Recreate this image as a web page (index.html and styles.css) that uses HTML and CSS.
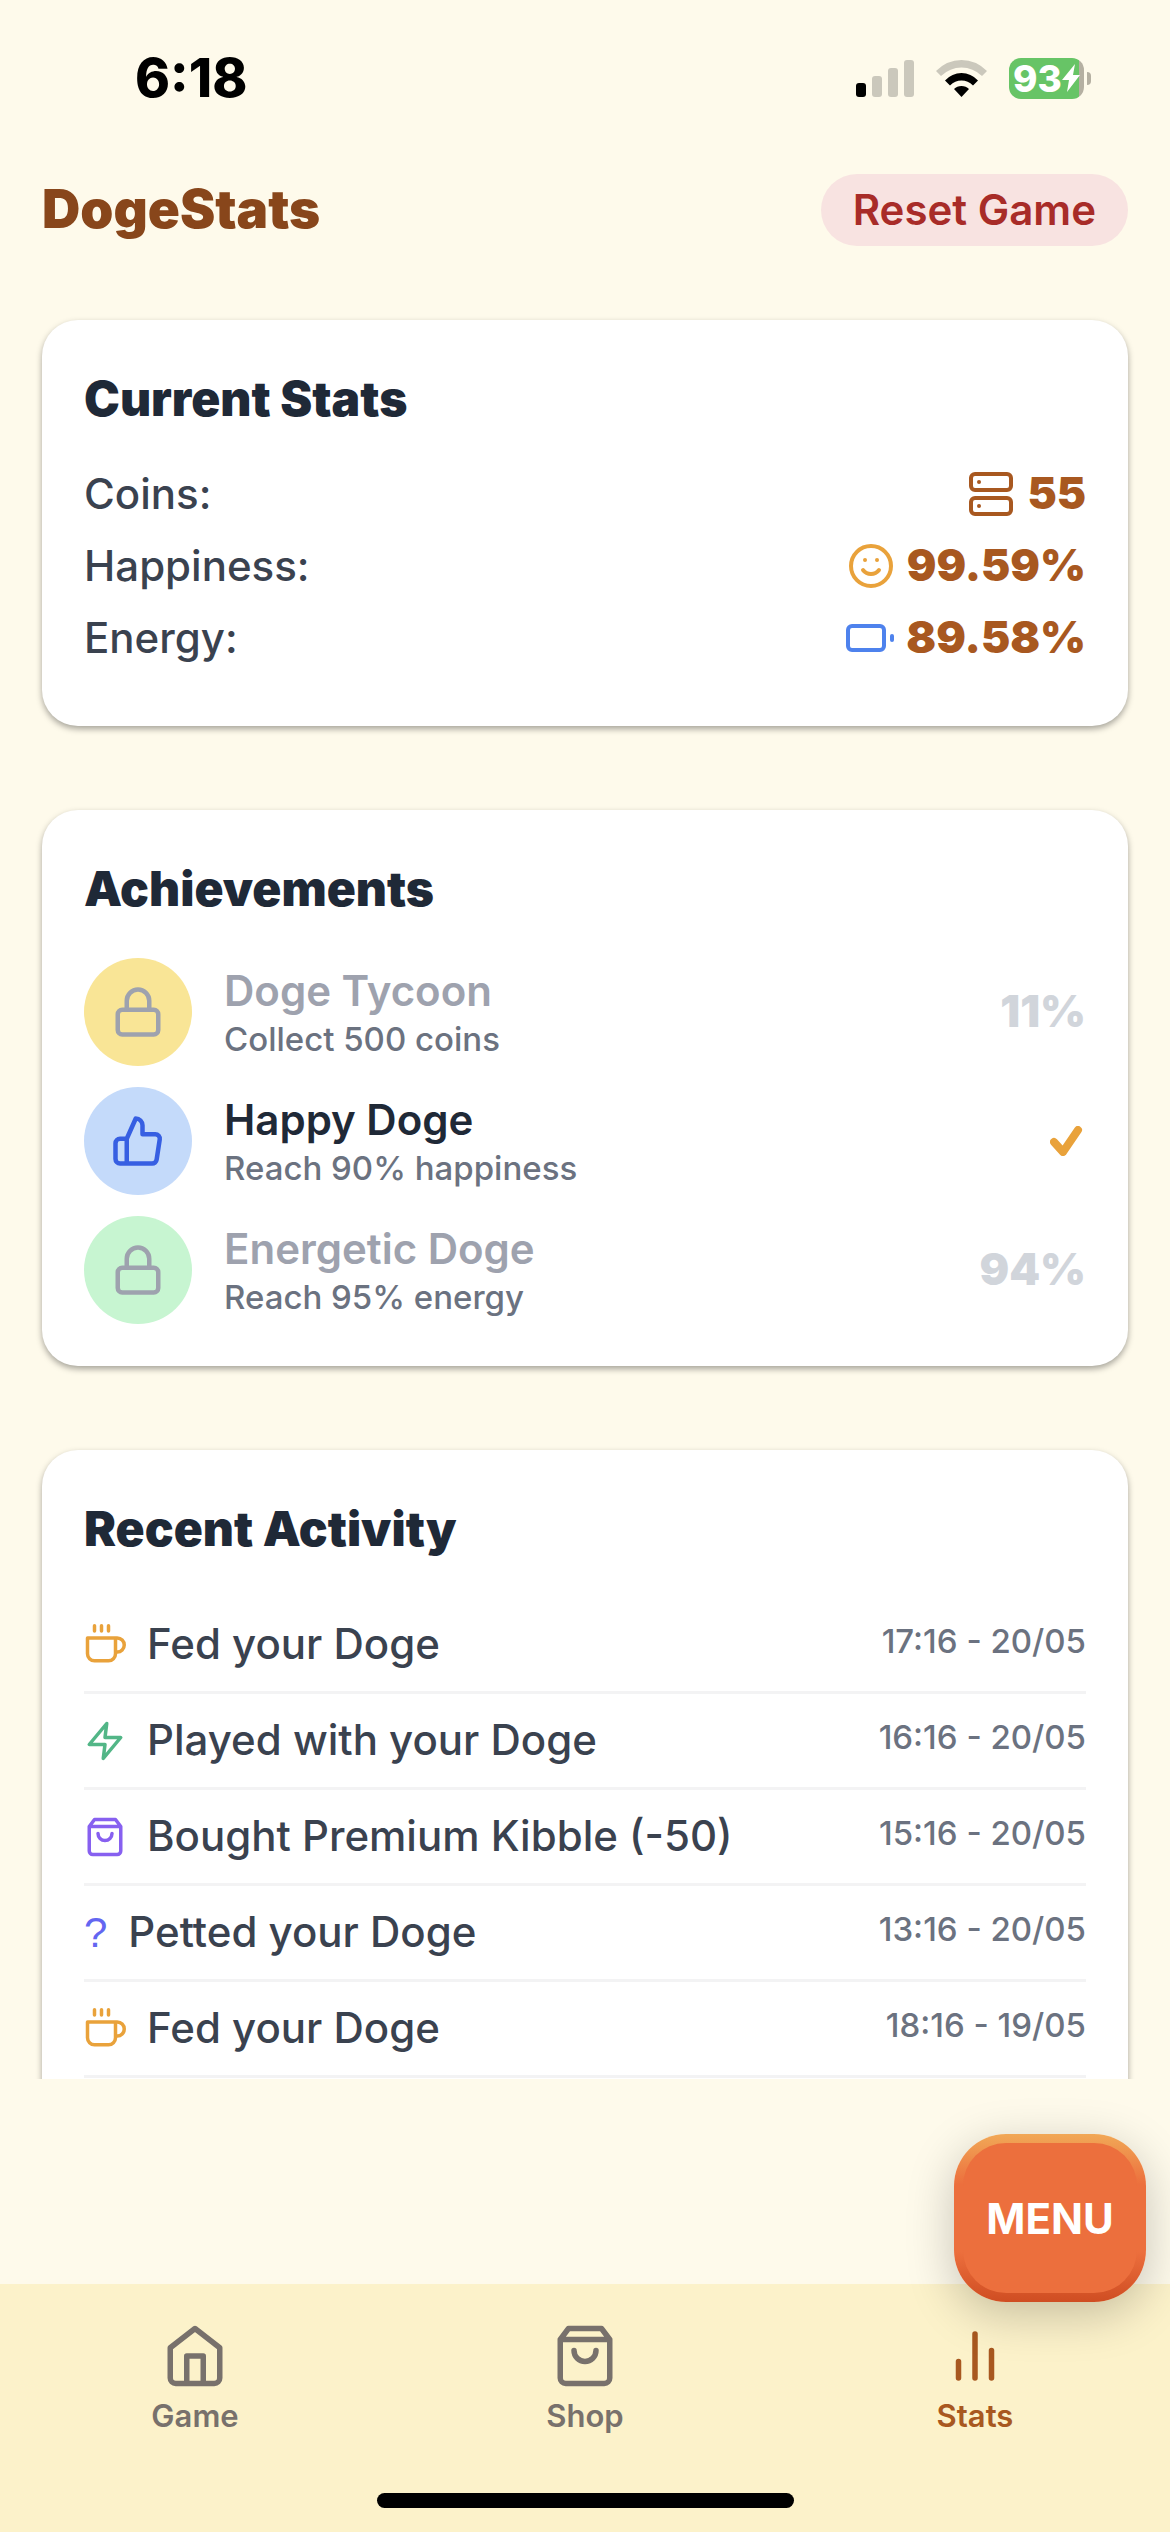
FILE: index.html
```html
<!DOCTYPE html>
<html lang="en">
<head>
<meta charset="utf-8">
<meta name="viewport" content="width=device-width, initial-scale=1">
<title>DogeStats</title>
<link rel="stylesheet" href="styles.css">
</head>
<body>
<svg class="sprite" aria-hidden="true">
  <symbol id="server" viewBox="0 0 24 24"><rect x="2" y="2" width="20" height="8" rx="2"/><rect x="2" y="14" width="20" height="8" rx="2"/><path d="M6 6h.01M6 18h.01"/></symbol>
  <symbol id="smile" viewBox="0 0 24 24"><circle cx="12" cy="12" r="10"/><path d="M8 14s1.500 2 4 2 4-2 4-2M9 9h.01M15 9h.01"/></symbol>
  <symbol id="battery" viewBox="0 0 24 24"><rect x="1" y="6" width="18" height="12" rx="2"/><path d="M23 13v-2"/></symbol>
  <symbol id="lock" viewBox="0 0 24 24"><rect x="3" y="11" width="18" height="11" rx="2"/><path d="M7 11V7a5 5 0 0 1 10 0v4"/></symbol>
  <symbol id="thumb" viewBox="0 0 24 24"><path d="M14 9V5a3 3 0 0 0-3-3l-4 9v11h11.280a2 2 0 0 0 2-1.700l1.380-9a2 2 0 0 0-2-2.300zM7 22H4a2 2 0 0 1-2-2v-7a2 2 0 0 1 2-2h3"/></symbol>
  <symbol id="coffee" viewBox="0 0 24 24"><path d="M18 8h1a4 4 0 0 1 0 8h-1M2 8h16v9a4 4 0 0 1-4 4H6a4 4 0 0 1-4-4zM6 1v3M10 1v3M14 1v3"/></symbol>
  <symbol id="zap" viewBox="0 0 24 24"><path d="M13 2 3 14h9l-1 8 10-12h-9z"/></symbol>
  <symbol id="bag" viewBox="0 0 24 24"><path d="M6 2 3 6v14a2 2 0 0 0 2 2h14a2 2 0 0 0 2-2V6l-3-4zM3 6h18M16 10a4 4 0 0 1-8 0"/></symbol>
  <symbol id="home" viewBox="0 0 24 24"><path d="m3 9 9-7 9 7v11a2 2 0 0 1-2 2H5a2 2 0 0 1-2-2zM9 22V12h6v10"/></symbol>
  <symbol id="chart" viewBox="0 0 24 24"><path d="M18 20V10M12 20V4M6 20v-6"/></symbol>
</svg>
<div class="app">
  <div class="status">
    <span class="clock">6:18</span>
    <div class="indicators">
      <svg class="signal" viewBox="0 0 58 37" aria-label="Signal"><rect y="23" width="10" height="14" rx="3"/><g class="dim"><rect x="16" y="16" width="10" height="21" rx="3"/><rect x="32" y="8" width="10" height="29" rx="3"/><rect x="48" width="10" height="37" rx="3"/></g></svg>
      <svg class="wifi" viewBox="0 0 51 37" aria-label="Wi-Fi"><path class="dim" d="M0 11Q11 0 25.500 0T51 11L46 16Q37 7.500 25.500 7.500T5 16Z"/><path d="M9 20.500Q16 13 25.500 13T42 20.500L37 25.500Q32 20.500 25.500 20.500T14 25.500ZM18 29Q21 26 25.500 26T33 29L25.500 37Z"/></svg>
      <div class="power"><span class="level">93<svg class="bolt" viewBox="0 0 18 28"><path d="M13 0 0 16h7L5 28 18 11h-7z"/></svg></span><span class="nub"></span></div>
    </div>
  </div>
  <header class="header">
    <h1>DogeStats</h1>
    <button class="reset" type="button">Reset Game</button>
  </header>
  <main class="content">
    <section class="card">
      <h2>Current Stats</h2>
      <dl class="stats">
        <div class="stat"><dt>Coins:</dt><dd><svg class="icon i48"><use href="#server"/></svg><span>55</span></dd></div>
        <div class="stat"><dt>Happiness:</dt><dd><svg class="icon i48 amber"><use href="#smile"/></svg><span>99.59%</span></dd></div>
        <div class="stat"><dt>Energy:</dt><dd><svg class="icon i48 blue"><use href="#battery"/></svg><span>89.58%</span></dd></div>
      </dl>
    </section>
    <section class="card">
      <h2>Achievements</h2>
      <ul class="achievements">
        <li class="achievement locked"><span class="badge yellow"><svg class="icon i54"><use href="#lock"/></svg></span><div class="about"><h3>Doge Tycoon</h3><p>Collect 500 coins</p></div><span class="progress">11%</span></li>
        <li class="achievement"><span class="badge sky"><svg class="icon i54"><use href="#thumb"/></svg></span><div class="about"><h3>Happy Doge</h3><p>Reach 90% happiness</p></div><svg class="check" viewBox="0 0 36 30" aria-label="Done"><path d="m4 16 9 10L28 4"/></svg></li>
        <li class="achievement locked"><span class="badge mint"><svg class="icon i54"><use href="#lock"/></svg></span><div class="about"><h3>Energetic Doge</h3><p>Reach 95% energy</p></div><span class="progress">94%</span></li>
      </ul>
    </section>
    <section class="card">
      <h2>Recent Activity</h2>
      <ul class="activity">
        <li><svg class="icon i42 amber"><use href="#coffee"/></svg><span class="event">Fed your Doge</span><time>17:16 - 20/05</time></li>
        <li><svg class="icon i42 green"><use href="#zap"/></svg><span class="event">Played with your Doge</span><time>16:16 - 20/05</time></li>
        <li><svg class="icon i42 purple"><use href="#bag"/></svg><span class="event">Bought Premium Kibble (-50)</span><time>15:16 - 20/05</time></li>
        <li><span class="unknown">?</span><span class="event">Petted your Doge</span><time>13:16 - 20/05</time></li>
        <li><svg class="icon i42 amber"><use href="#coffee"/></svg><span class="event">Fed your Doge</span><time>18:16 - 19/05</time></li>
      </ul>
    </section>
  </main>
  <nav class="tabs">
    <a href="#game"><svg class="icon i66"><use href="#home"/></svg>Game</a>
    <a href="#shop"><svg class="icon i66"><use href="#bag"/></svg>Shop</a>
    <a href="#stats" class="active" aria-current="page"><svg class="icon i66"><use href="#chart"/></svg>Stats</a>
    <span class="home-bar"></span>
  </nav>
  <button class="menu" type="button"><span>MENU</span></button>
</div>
</body>
</html>
```
FILE: styles.css
```css
* { box-sizing: border-box; }
body, h1, h2, h3, p, dl, dd, ul { margin: 0; padding: 0; }
ul { list-style: none; }
button { border: 0; font: inherit; cursor: pointer; }

body {
  background: #fefaeb;
  color: #3a424f;
  font-family: Inter, "Liberation Sans", sans-serif;
  font-size: 42px;
  font-weight: 500;
}

.sprite { position: absolute; width: 0; height: 0; }

.app {
  position: relative;
  display: flex;
  flex-direction: column;
  height: 100vh;
  overflow: hidden;
}

.icon {
  flex: none;
  fill: none;
  stroke: currentColor;
  stroke-width: 2;
  stroke-linecap: round;
  stroke-linejoin: round;
}
.i42 { width: 42px; height: 42px; }
.i48 { width: 48px; height: 48px; }
.i54 { width: 54px; height: 54px; }
.i66 { width: 66px; height: 66px; }
.amber { color: #e9a23b; }
.blue { color: #4e82ed; }
.green { color: #52b687; }
.purple { color: #8760f0; }

/* Status bar */
.status {
  flex: none;
  display: flex;
  justify-content: space-between;
  align-items: center;
  height: 156px;
  padding: 0 79px 0 135px;
  color: #000;
}
.clock { font-size: 53px; font-weight: 800; }
.indicators { display: flex; align-items: center; gap: 22px; }
.signal { width: 58px; height: 37px; }
.wifi { width: 51px; height: 37px; }
.dim { fill: #cbc8bc; }
.power { display: flex; align-items: center; gap: 3px; }
.level {
  display: flex;
  align-items: center;
  justify-content: center;
  width: 75px;
  height: 41px;
  border-radius: 12px;
  background: linear-gradient(90deg, #67c466 70px, #b5b0a2 70px);
  color: #fff;
  font-size: 37px;
  font-weight: 800;
}
.bolt { width: 18px; height: 28px; fill: #fff; }
.nub { width: 4px; height: 13px; border-radius: 0 4px 4px 0; background: #b5b0a2; }

/* Header */
.header {
  flex: none;
  display: flex;
  align-items: center;
  justify-content: space-between;
  padding: 18px 42px 42px;
}
h1 { color: #88461b; font-size: 53px; font-weight: 900; line-height: 70px; padding-bottom: 2px; }
.reset {
  height: 72px;
  padding: 0 32px 2px;
  border-radius: 36px;
  background: #f8e3e1;
  color: #a82c28;
  font-weight: 600;
}

/* Cards */
.content {
  flex: 1;
  min-height: 0;
  overflow: hidden;
  display: flex;
  flex-direction: column;
  gap: 84px;
  margin-bottom: 205px;
  padding: 32px 42px 0;
}
.card {
  flex: none;
  padding: 42px;
  border-radius: 36px;
  background: #fff;
  box-shadow: 0 3px 6px rgba(0, 0, 0, .35);
}
h2 {
  padding-bottom: 2px;
  color: #1f2937;
  font-size: 48px;
  font-weight: 900;
  line-height: 73px;
}

.stats { margin: 21px 0 10px; }
.stat {
  display: flex;
  justify-content: space-between;
  align-items: center;
  height: 72px;
}
.stat dt, .stat dd span, .event, .progress { padding-bottom: 2px; }
.stat dd {
  display: flex;
  align-items: center;
  gap: 12px;
  color: #a85820;
  font-size: 44px;
  font-weight: 900;
}

.achievements { display: flex; flex-direction: column; gap: 21px; margin-top: 31px; }
.achievement { display: flex; align-items: center; gap: 32px; }
.badge {
  display: flex;
  align-items: center;
  justify-content: center;
  width: 108px;
  height: 108px;
  border-radius: 50%;
}
.yellow { background: #f9e596; }
.sky { background: #c4dafa; color: #375fe2; }
.mint { background: #c7f5d1; }
.locked .badge { color: #9ea2ae; }
.about { flex: 1; }
h3 { color: #1f2937; font-size: 42px; font-weight: 600; line-height: 54px; }
.locked h3 { color: #9ea2ae; }
.about p { color: #6b7280; font-size: 33px; line-height: 42px; }
.progress { color: #d1d5db; font-size: 44px; font-weight: 900; }
.check {
  width: 36px;
  height: 30px;
  fill: none;
  stroke: #e9a23b;
  stroke-width: 8;
  stroke-linecap: round;
  stroke-linejoin: round;
}

.activity { margin-top: 31px; }
.activity li {
  display: flex;
  align-items: center;
  gap: 21px;
  height: 96px;
  border-bottom: 3px solid #f3f3f4;
}
.event { flex: 1; }
.unknown { color: #6366f1; font-family: "Liberation Sans", sans-serif; font-weight: 400; }
time { padding-bottom: 8px; color: #6b7280; font-size: 33px; }

/* Tab bar */
.tabs {
  position: relative;
  flex: none;
  display: grid;
  grid-template-columns: repeat(3, 1fr);
  height: 248px;
  padding-top: 39px;
  background: #fcf2ca;
}
.tabs a {
  display: flex;
  flex-direction: column;
  align-items: center;
  gap: 8px;
  color: #78716c;
  font-size: 31px;
  font-weight: 600;
  line-height: 38px;
  text-decoration: none;
}
.tabs .active { color: #a85820; }
.home-bar {
  position: absolute;
  left: 50%;
  bottom: 24px;
  width: 417px;
  height: 15px;
  margin-left: -208px;
  border-radius: 8px;
  background: #000;
}

/* Floating menu button */
.menu {
  position: absolute;
  right: 24px;
  bottom: 230px;
  width: 192px;
  height: 168px;
  padding: 9px;
  border-radius: 52px;
  background: linear-gradient(#f1a857, #ec6f3d 30%, #ec6f3d 70%, #cf4d22);
  box-shadow: 0 12px 48px rgba(0, 0, 0, .22);
  color: #fff;
  font-size: 42px;
  font-weight: 700;
}
.menu span {
  display: flex;
  align-items: center;
  justify-content: center;
  height: 100%;
  border-radius: 43px;
  background: #ec6f3d;
}
```
